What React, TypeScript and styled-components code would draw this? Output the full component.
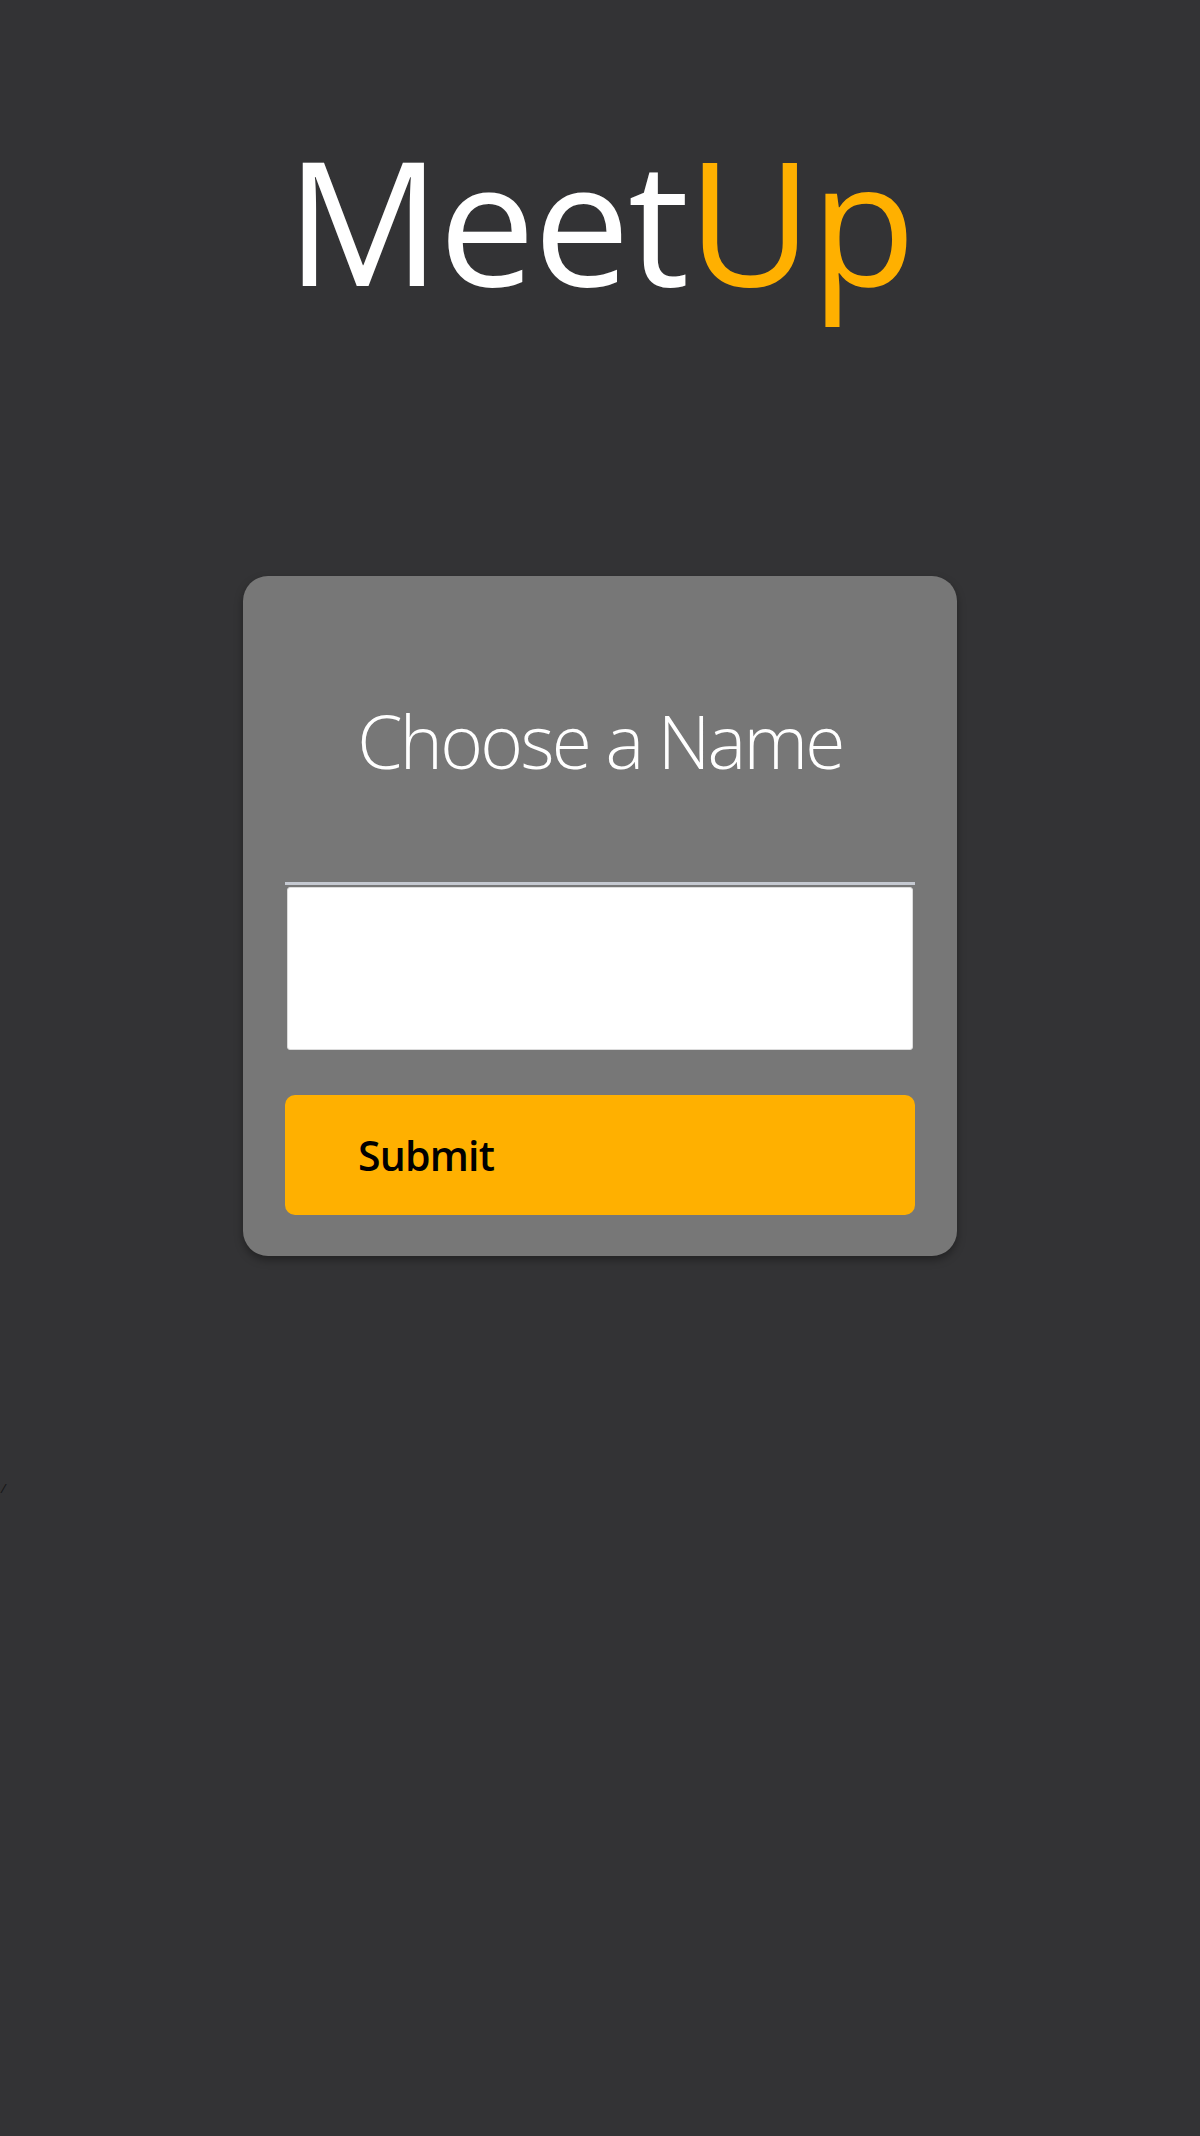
import styled, { createGlobalStyle } from "styled-components";

const GlobalStyle = createGlobalStyle`
  html, body {
    margin: 0;
    padding: 0;
    background: #333335;
    min-height: 2136px;
  }
  body {
    font-family: "Open Sans", "Noto Sans", sans-serif;
  }
`;

const Page = styled.div`
  display: flex;
  flex-direction: column;
  align-items: center;
  min-height: 2136px;
`;

const Logo = styled.h1`
  margin: 133px 0 0;
  font-size: 172px;
  line-height: 1;
  font-weight: 400;
  letter-spacing: -2px;
  color: #ffffff;
`;

const Accent = styled.span`
  color: #ffb000;
`;

const Card = styled.form`
  box-sizing: border-box;
  width: 714px;
  height: 680px;
  margin-top: 271px;
  padding: 0 42px 41px;
  display: flex;
  flex-direction: column;
  background: #777777;
  border-radius: 25px;
  box-shadow: 0 4px 8px rgba(0, 0, 0, 0.35);
`;

const Heading = styled.h2`
  margin: 128px 0 0;
  font-size: 73px;
  line-height: 1;
  font-weight: 300;
  letter-spacing: -2.7px;
  color: #ffffff;
  text-align: center;
`;

const Rule = styled.hr`
  margin: 105px 0 0;
  border: none;
  height: 3px;
  background: #c5c9d1;
`;

const NameInput = styled.input`
  box-sizing: border-box;
  margin: 2px 2px 0;
  height: 163px;
  border: 1px solid #dcdcdc;
  border-radius: 3px;
  background: #ffffff;
  outline: none;
`;

const SubmitButton = styled.button`
  margin-top: 45px;
  height: 120px;
  padding: 0 0 0 73px;
  border: none;
  border-radius: 10px;
  background: #ffb000;
  color: #000000;
  font-family: "Open Sans", "Noto Sans", sans-serif;
  font-size: 41px;
  font-weight: 600;
  letter-spacing: -0.8px;
  text-align: left;
`;

const Stray = styled.div`
  align-self: flex-start;
  margin-top: 223px;
  padding-left: 1px;
  font-size: 13px;
  font-style: italic;
  color: #151515;
`;

export default function App() {
  return (
    <>
      <GlobalStyle />
      <Page>
        <Logo>
          Meet<Accent>Up</Accent>
        </Logo>
        <Card onSubmit={(e) => e.preventDefault()}>
          <Heading>Choose a Name</Heading>
          <Rule />
          <NameInput type="text" />
          <SubmitButton type="submit">Submit</SubmitButton>
        </Card>
        <Stray>/</Stray>
      </Page>
    </>
  );
}
